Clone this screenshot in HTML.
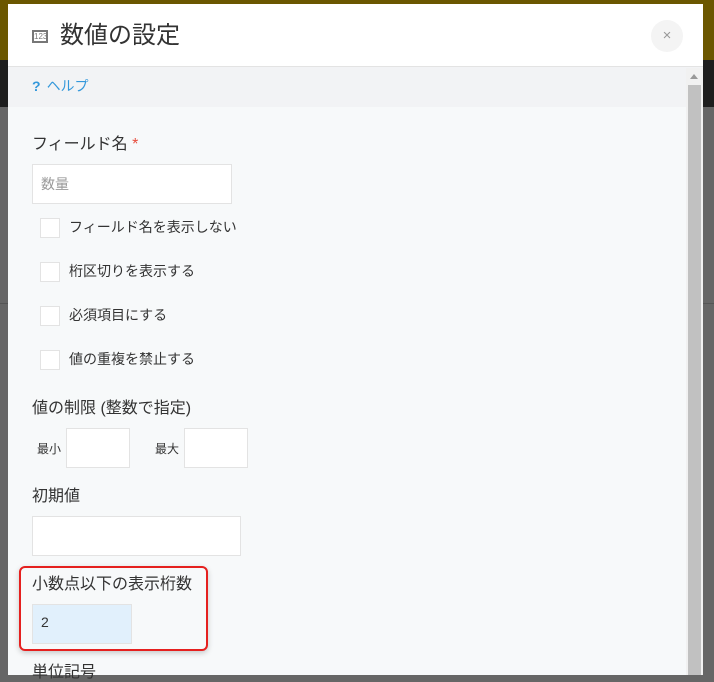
<!DOCTYPE html>
<html><head><meta charset="utf-8"><style>
*{box-sizing:border-box;margin:0;padding:0}
body{width:714px;height:675px;overflow:hidden;position:relative;background:#666;font-family:"Liberation Sans","Noto Sans CJK JP",sans-serif;color:#333}
.olive{position:absolute;left:0;top:0;width:714px;height:60px;background:#6b5700}
.dark{position:absolute;left:0;top:60px;width:714px;height:47px;background:#1e1e1e}
.line{position:absolute;left:0;top:303px;width:714px;height:1px;background:#555}
.modal{position:absolute;left:8px;top:4px;width:695px;height:671px;background:#f7f9fa;overflow:hidden}
.hd{height:63px;background:#fff;border-bottom:1px solid #e3e3e3;position:relative}
.hd .ic{position:absolute;left:24px;top:26px;width:16px;height:13px;border:2px solid #777;font-size:8px;line-height:9px;text-align:center;color:#777}
.hd h1{position:absolute;left:52px;top:11px;font-size:24px;font-weight:normal;color:#333}
.close{position:absolute;left:643px;top:16px;width:32px;height:32px;border-radius:50%;background:#f4f4f4;color:#999;text-align:center;line-height:31px;font-size:15px}
.help{height:40px;background:#f2f3f5;padding:9px 0 0 24px;font-size:14px;color:#3498db}
.help b{margin-right:6px}
.sb{position:absolute;left:678px;top:64px;width:17px;height:607px;background:#f1f1f1}
.sb .th{position:absolute;left:2px;top:17px;width:13px;height:600px;background:#c1c1c1}
.sb .ar{position:absolute;left:4px;top:6px;width:0;height:0;border-left:4px solid transparent;border-right:4px solid transparent;border-bottom:5px solid #999}
.a{position:absolute;font-size:16px;color:#333;margin-top:-3px}
.in{position:absolute;background:#fff;border:1px solid #e3e3e3}
.cb{position:absolute;width:20px;height:20px;background:#fff;border:1px solid #e3e3e3}
.cl{position:absolute;font-size:14px;color:#333;margin-top:-1px}
.s{position:absolute;font-size:12px;color:#333}
.red{position:absolute;left:19px;top:566px;width:189px;height:85px;border:2px solid #e5201f;border-radius:6px;box-shadow:0 2px 6px rgba(0,0,0,.2)}
</style></head><body>
<div class="olive"></div><div class="dark"></div><div class="line"></div>
<div class="modal">
<div class="hd"><div class="ic">123</div><h1>数値の設定</h1><div class="close">×</div></div>
<div class="help"><b>?</b>ヘルプ</div>
<div class="sb"><div class="ar"></div><div class="th"></div></div>
</div>
<div class="a" style="left:32px;top:133px">フィールド名 <span style="color:#e74c3c">*</span></div>
<div class="in" style="left:32px;top:164px;width:200px;height:40px"></div>
<div class="cl" style="left:41px;top:175px;color:#999">数量</div>
<div class="cb" style="left:40px;top:218px"></div><div class="cl" style="left:69px;top:218px">フィールド名を表示しない</div>
<div class="cb" style="left:40px;top:262px"></div><div class="cl" style="left:69px;top:262px">桁区切りを表示する</div>
<div class="cb" style="left:40px;top:306px"></div><div class="cl" style="left:69px;top:306px">必須項目にする</div>
<div class="cb" style="left:40px;top:350px"></div><div class="cl" style="left:69px;top:350px">値の重複を禁止する</div>
<div class="a" style="left:32px;top:397px">値の制限 (整数で指定)</div>
<div class="s" style="left:37px;top:440px">最小</div>
<div class="in" style="left:66px;top:428px;width:64px;height:40px"></div>
<div class="s" style="left:155px;top:440px">最大</div>
<div class="in" style="left:184px;top:428px;width:64px;height:40px"></div>
<div class="a" style="left:32px;top:485px">初期値</div>
<div class="in" style="left:32px;top:516px;width:209px;height:40px"></div>
<div class="red"></div>
<div class="a" style="left:32px;top:573px">小数点以下の表示桁数</div>
<div class="in" style="left:32px;top:604px;width:100px;height:40px;background:#e1f0fc"></div>
<div class="cl" style="left:41px;top:615px">2</div>
<div class="a" style="left:32px;top:661px">単位記号</div>
</body></html>
